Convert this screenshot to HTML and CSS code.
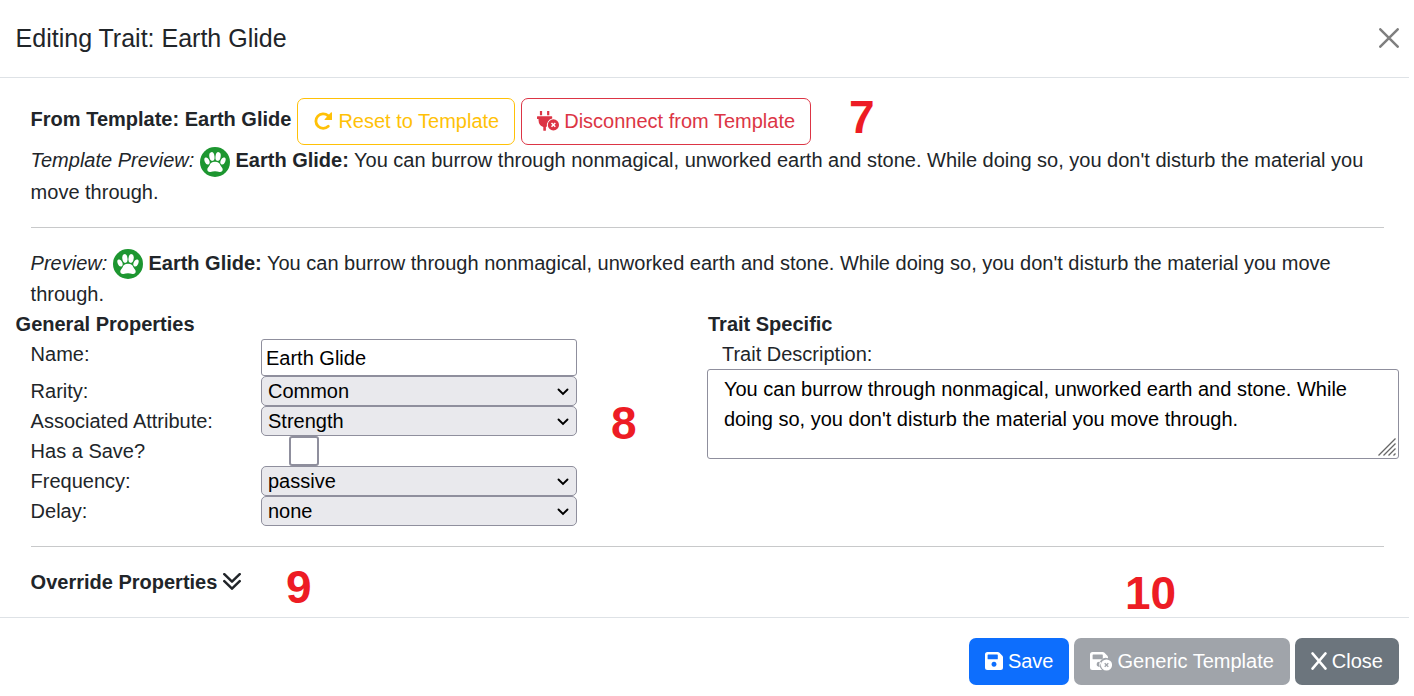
FILE: index.html
```html
<!DOCTYPE html>
<html lang="en">
<head>
<meta charset="utf-8">
<title>Editing Trait: Earth Glide</title>
<link rel="stylesheet" href="styles.css">
</head>
<body>
<svg class="defs" aria-hidden="true">
  <symbol id="paw" viewBox="0 0 30 30">
    <circle cx="15" cy="15" r="15" fill="#1d9630"/>
    <g fill="#fff">
      <ellipse cx="11.900" cy="9.500" rx="2.600" ry="4.400" transform="rotate(-8 11.900 9.500)"/>
      <ellipse cx="18.100" cy="9.500" rx="2.600" ry="4.400" transform="rotate(8 18.100 9.500)"/>
      <ellipse cx="7" cy="14" rx="2.300" ry="3.700" transform="rotate(-24 7 14)"/>
      <ellipse cx="23" cy="14" rx="2.300" ry="3.700" transform="rotate(24 23 14)"/>
      <path d="M15 14.800c3.200 0 4.700 1.600 5.400 3.400.5 1.400 2.300 2.400 2.300 4.300s-1.300 2.600-3.200 2.400c-1.600-.3-2.800-.6-4.500-.6s-2.900.3-4.500.6c-1.900.2-3.200-.5-3.200-2.400s1.800-2.900 2.300-4.300c.7-1.800 2.200-3.400 5.400-3.400z"/>
    </g>
  </symbol>
  <symbol id="chev" viewBox="0 0 12 8"><path d="M1.500 1.500 6 6l4.500-4.500" fill="none" stroke="#000" stroke-width="1.900" stroke-linecap="round"/></symbol>
</svg>
<div class="modal">
  <header class="head">
    <h1 class="title">Editing Trait: Earth Glide</h1>
    <svg class="dismiss" viewBox="0 0 20 20"><path d="M1.300 1.300 18.700 18.700M18.700 1.300 1.300 18.700"/></svg>
  </header>
  <main class="body">
    <section class="inset">
      <div class="source">
        <b class="source-name">From Template: Earth Glide</b>
        <button class="btn warn"><svg class="ico reset" viewBox="0 0 18 18"><path d="M14.300 14.300A7.300 7.300 0 1 1 14 3.600L15.800 5.400" fill="none" stroke="currentColor" stroke-width="2.800" stroke-linecap="round"/><path d="M17.100.3q.9-.2.900.7v6.500q0 .6-.6.600h-6.300q-1-.1-.4-.9z" fill="currentColor"/></svg>Reset to Template</button>
        <button class="btn danger"><svg class="ico wide" viewBox="0 0 22 20"><path d="M4 0v4.200M11.200 0v4.200" stroke="currentColor" stroke-width="2.200"/><path d="M.6 5.200h14q.6 0 .6.600V7.500A7 7 0 0 0 9.900 15.500L8.900 16v3.200q0 .5-.5.500H6.800q-.5 0-.5-.5V16Q1.700 14.500 1.500 9V8H.6Q0 8 0 7.400V5.800q0-.6.600-.6z" fill="currentColor"/><circle cx="16.400" cy="13.900" r="5.600" fill="currentColor"/><path d="m14.500 12 3.800 3.800m0-3.800-3.800 3.800" stroke="#fff" stroke-width="1.500"/></svg>Disconnect from Template</button>
      </div>
      <p class="preview"><i>Template Preview:</i> <svg class="paw"><use href="#paw"/></svg> <b>Earth Glide:</b> You can burrow through nonmagical, unworked earth and stone. While doing so, you don't disturb the material you move through.</p>
      <hr class="rule">
      <p class="preview second"><i>Preview:</i> <svg class="paw"><use href="#paw"/></svg> <b>Earth Glide:</b> You can burrow through nonmagical, unworked earth and stone. While doing so, you don't disturb the material you move through.</p>
    </section>
    <div class="columns">
      <section class="general">
        <h2 class="group">General Properties</h2>
        <div class="field name"><span class="label">Name:</span><input class="text" value="Earth Glide"></div>
        <div class="field"><span class="label">Rarity:</span><div class="select">Common<svg class="chev"><use href="#chev"/></svg></div></div>
        <div class="field"><span class="label">Associated Attribute:</span><div class="select">Strength<svg class="chev"><use href="#chev"/></svg></div></div>
        <div class="field"><span class="label">Has a Save?</span><span class="check"></span></div>
        <div class="field"><span class="label">Frequency:</span><div class="select">passive<svg class="chev"><use href="#chev"/></svg></div></div>
        <div class="field"><span class="label">Delay:</span><div class="select">none<svg class="chev"><use href="#chev"/></svg></div></div>
      </section>
      <section class="specific">
        <h2 class="group">Trait Specific</h2>
        <div class="desc-label">Trait Description:</div>
        <div class="area">You can burrow through nonmagical, unworked earth and stone. While doing so, you don't disturb the material you move through.<svg class="grip" viewBox="0 0 18 18"><path d="M.5 17.500 17.500.5M5.500 17.500l12-12M10.500 17.500l7-7M15.500 17.500l2-2"/></svg></div>
      </section>
    </div>
    <section class="inset">
      <hr class="rule">
      <div class="override">Override Properties<svg class="down" viewBox="0 0 18 17"><path d="m1.300 1.200 7.700 7.500 7.700-7.500M1.300 8.200 9 15.700l7.700-7.500"/></svg></div>
    </section>
  </main>
  <footer class="foot">
    <button class="btn save"><svg class="ico" viewBox="0 0 18 18"><path fill="currentColor" fill-rule="evenodd" d="M2.500 0h10.300q.8 0 1.400.6l3.200 3.200q.6.600.6 1.400v10.300q0 2.500-2.500 2.500h-13Q0 18 0 15.500v-13Q0 0 2.500 0zM2.600 3.200v3.500q0 .6.600.600h9q.6 0 .6-.6V3.200q0-.6-.6-.6h-9q-.6 0-.6.600zM9 9.800a2.500 2.500 0 1 0 .01 0z"/></svg>Save</button>
    <button class="btn generic"><svg class="ico wide" viewBox="0 0 22 20"><path fill="currentColor" fill-rule="evenodd" d="M2.500 1h10.300q.8 0 1.400.6l3.200 3.200q.6.600.6 1.400v1.100A6.500 6.500 0 0 0 11 17.700L12 19H2.500Q0 19 0 16.500v-13Q0 1 2.500 1zM2.600 4.200v3.500q0 .6.600.600h9q.6 0 .6-.6V4.200q0-.6-.6-.6h-9q-.6 0-.6.600zM9 10.800a2.500 2.500 0 0 0-.6 4.900q.8.200 1.700-.2.100-2.100 1.200-3.700-.8-1-2.300-1z"/><circle cx="16.500" cy="14" r="5.600" fill="currentColor"/><path d="m14.700 12.200 3.600 3.600m0-3.600-3.600 3.600" stroke="#a0a4aa" stroke-width="1.300"/></svg>Generic Template</button>
    <button class="btn close"><svg class="ico cross" viewBox="0 0 16 18"><path d="m1.500 1.400 13 15.200m0-15.200-13 15.200" fill="none" stroke="currentColor" stroke-width="2.500" stroke-linecap="round"/></svg>Close</button>
  </footer>
  <span class="mark m7">7</span>
  <span class="mark m8">8</span>
  <span class="mark m9">9</span>
  <span class="mark m10">10</span>
</div>
</body>
</html>
```
FILE: styles.css
```css
* { box-sizing: border-box; }
body { margin: 0; background: #fff; color: #212529; font: 20px/30px "Liberation Sans", Arial, sans-serif; overflow: hidden; }
.defs { position: absolute; width: 0; height: 0; }
.modal { position: relative; width: 1409px; height: 696px; }
.head { display: flex; justify-content: space-between; align-items: center; height: 78px; padding: 0 10px 1px 15.6px; border-bottom: 1px solid #dee2e6; }
.title { margin: 0; font-size: 25px; font-weight: 400; line-height: 38px; }
.dismiss { width: 20px; height: 20px; fill: none; stroke: #7f7f7f; stroke-width: 2.5; stroke-linecap: round; }
.body { height: 539px; padding: 20px 10px 0 15.6px; }
.inset { padding: 0 15px; }
.source { display: flex; align-items: center; gap: 6px; height: 47px; }
.source-name { padding-bottom: 5px; }
.btn { display: flex; align-items: center; height: 47px; padding: 0 15px 2px; border: 1px solid transparent; border-radius: 7px; background: none; color: #fff; font: inherit; white-space: nowrap; }
.warn { color: #ffc107; border-color: #ffc107; }
.danger { color: #dc3545; border-color: #dc3545; }
.ico { width: 18px; height: 18px; margin-right: 5px; }
.reset { margin: 0 6px 0 1px; }
.wide { width: 22px; height: 20px; }
.cross { width: 16px; }
.preview { margin: 0; }
.second { height: 61px; }
.paw { width: 30px; height: 30px; vertical-align: middle; }
.rule { margin: 20px 0; border: 0; border-top: 1px solid #c8c9ca; }
.columns { display: grid; grid-template-columns: 691.4px 692px; }
.group { margin: 0; font-size: 20px; font-weight: 700; }
.specific .group { padding-left: 1px; }
.field { display: grid; grid-template-columns: 230.4px 316px; height: 30px; padding-left: 15px; }
.name { height: 37px; }
.text { height: 37px; padding: 2px 4px 0; border: 1px solid #8f8f9d; border-radius: 3px; background: #fff; color: #000; font: inherit; }
.select { display: flex; justify-content: space-between; align-items: center; height: 30px; padding: 0 7px 0 6px; border: 1px solid #8f8f9d; border-radius: 5px; background: #e9e9ed; color: #000; }
.chev { width: 12px; height: 8px; margin-top: 2px; }
.check { width: 30px; height: 30px; margin-left: 28px; border: 2px solid #8f8f9d; border-radius: 3px; background: #fff; }
.desc-label { padding-left: 15px; }
.area { position: relative; height: 90px; padding: 4px 16px; border: 1px solid #8f8f9d; border-radius: 3px; color: #000; }
.grip { position: absolute; right: 2px; bottom: 2px; width: 18px; height: 18px; fill: none; stroke: #666; stroke-width: 1.3; }
.override { display: flex; align-items: center; gap: 6px; font-weight: 700; }
.down { width: 18px; height: 17px; fill: none; stroke: #212529; stroke-width: 2.5; stroke-linecap: round; stroke-linejoin: round; }
.foot { display: flex; justify-content: flex-end; gap: 5px; padding: 20px 10px 0; border-top: 1px solid #dee2e6; }
.save { background: #0d6efd; }
.generic { background: #a0a4aa; }
.close { background: #6c757d; }
.mark { position: absolute; color: #ed1c24; font-weight: 700; font-size: 46px; line-height: 50px; }
.m7 { left: 849px; top: 92px; }
.m8 { left: 611px; top: 398px; }
.m9 { left: 286px; top: 562px; }
.m10 { left: 1125px; top: 568px; }
```
